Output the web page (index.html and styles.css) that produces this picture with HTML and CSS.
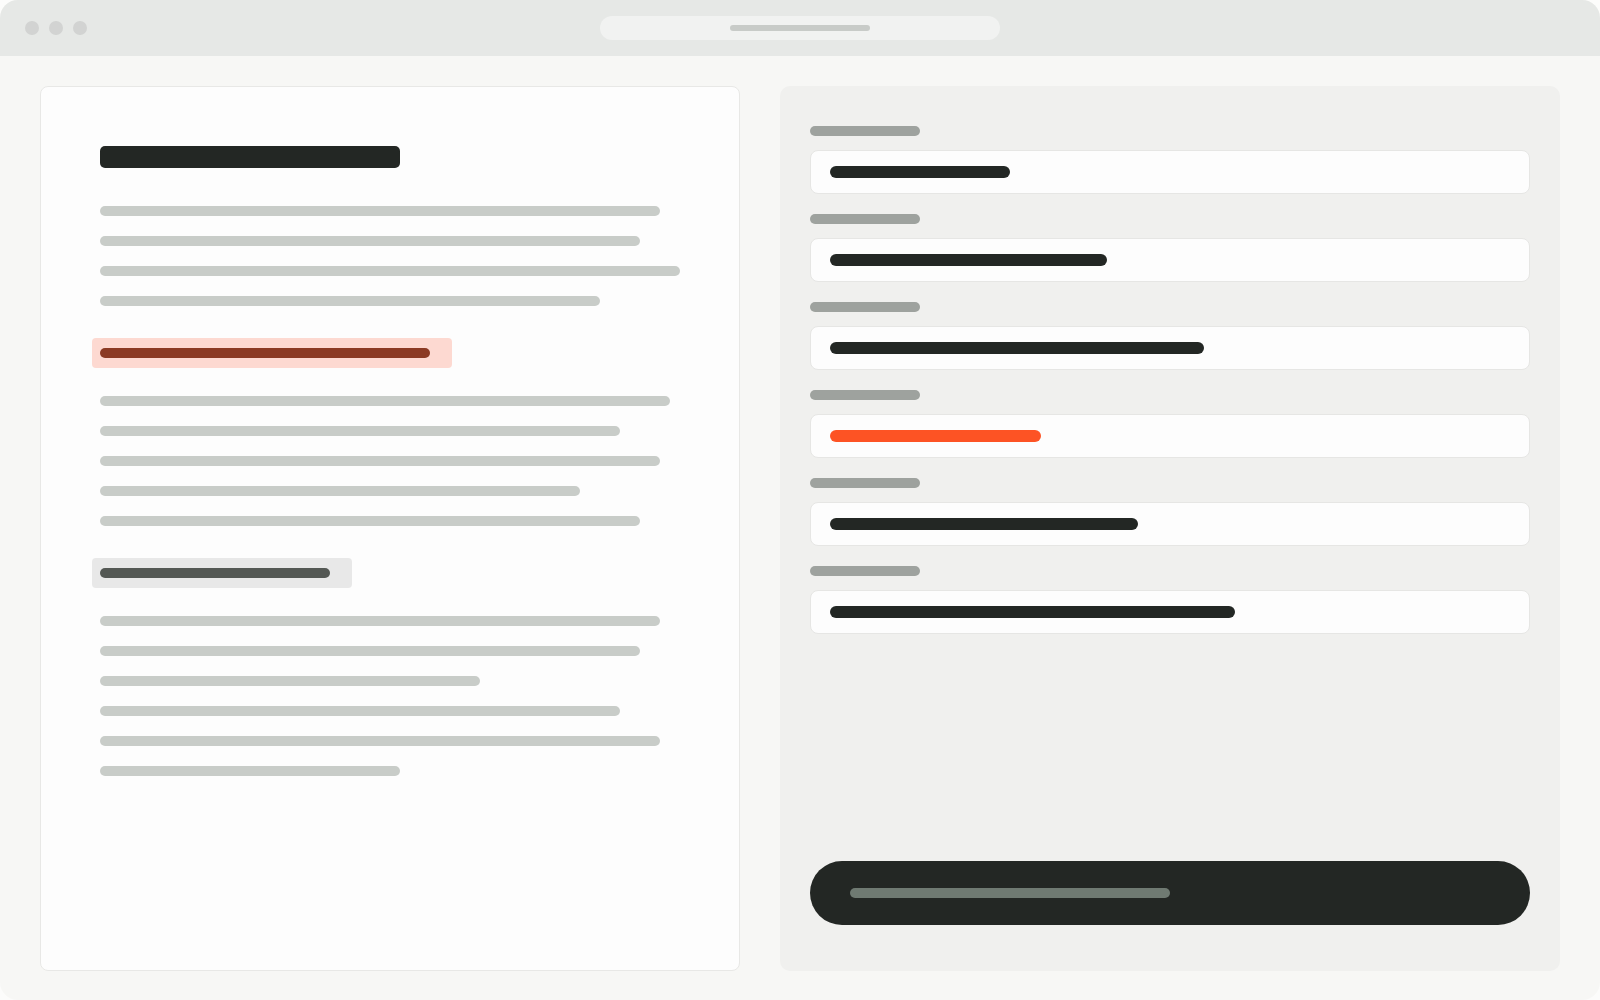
FILE: index.html
```html
<!DOCTYPE html>
<html lang="en">
<head>
<meta charset="utf-8">
<title>Document review</title>
<link rel="stylesheet" href="styles.css">
</head>
<body>
<div class="window">
  <header class="titlebar">
    <div class="dots"><span class="dot"></span><span class="dot"></span><span class="dot"></span></div>
    <div class="urlbar"><span class="url-line"></span></div>
    <div></div>
  </header>
  <main class="main">
    <section class="doc">
      <div class="doc-title"></div>
      <div class="lines">
        <div class="line w560"></div>
        <div class="line w540"></div>
        <div class="line w580"></div>
        <div class="line w500"></div>
      </div>
      <div class="mark mark-red"><span class="mark-line w330"></span></div>
      <div class="lines">
        <div class="line w570"></div>
        <div class="line w520"></div>
        <div class="line w560"></div>
        <div class="line w480"></div>
        <div class="line w540"></div>
      </div>
      <div class="mark mark-gray"><span class="mark-line w230"></span></div>
      <div class="lines">
        <div class="line w560"></div>
        <div class="line w540"></div>
        <div class="line w380"></div>
        <div class="line w520"></div>
        <div class="line w560"></div>
        <div class="line w300"></div>
      </div>
    </section>
    <aside class="panel">
      <div class="fields">
        <div class="field"><div class="label"></div><div class="input"><span class="value w180"></span></div></div>
        <div class="field"><div class="label"></div><div class="input"><span class="value w277"></span></div></div>
        <div class="field"><div class="label"></div><div class="input"><span class="value w374"></span></div></div>
        <div class="field"><div class="label"></div><div class="input"><span class="value value-alert w211"></span></div></div>
        <div class="field"><div class="label"></div><div class="input"><span class="value w308"></span></div></div>
        <div class="field"><div class="label"></div><div class="input"><span class="value w405"></span></div></div>
      </div>
      <button class="submit" type="button"><span class="submit-line"></span></button>
    </aside>
  </main>
</div>
</body>
</html>
```

FILE: styles.css
```css
* { box-sizing: border-box; }
html, body { margin: 0; padding: 0; }
body {
  background: #fcfcfb;
  font-family: "Liberation Sans", Arial, sans-serif;
  width: 1600px;
  height: 1000px;
  overflow: hidden;
}
.window {
  width: 1600px;
  height: 1000px;
  background: #f7f7f5;
  border-radius: 18px;
  overflow: hidden;
  display: flex;
  flex-direction: column;
}
.titlebar {
  height: 56px;
  flex: 0 0 56px;
  background: #e6e8e6;
  display: grid;
  grid-template-columns: 1fr 400px 1fr;
  align-items: center;
}
.dots {
  display: flex;
  gap: 10px;
  padding-left: 25px;
}
.dot {
  width: 14px;
  height: 14px;
  border-radius: 50%;
  background: #d2d3d2;
}
.urlbar {
  height: 24px;
  border-radius: 12px;
  background: #f1f2f1;
  display: flex;
  align-items: center;
  justify-content: center;
}
.url-line {
  width: 140px;
  height: 6px;
  border-radius: 3px;
  background: #c8cbc8;
}
.main {
  flex: 1;
  display: flex;
  gap: 40px;
  padding: 30px 40px 29px 40px;
}
.doc {
  width: 700px;
  background: #fdfdfd;
  border: 1px solid #e8e8e6;
  border-radius: 8px;
  padding: 59px 59px;
  display: flex;
  flex-direction: column;
  align-items: flex-start;
}
.doc-title {
  width: 300px;
  height: 22px;
  border-radius: 5px;
  background: #232724;
  margin-bottom: 38px;
}
.lines {
  display: flex;
  flex-direction: column;
  gap: 20px;
}
.line {
  height: 10px;
  border-radius: 5px;
  background: #c8ccc8;
}
.mark {
  margin: 32px 0 28px -8px;
  padding: 10px 8px;
  border-radius: 4px;
}
.mark-red { width: 360px; background: #fdd9d1; }
.mark-red .mark-line { background: #8b3a24; }
.mark-gray { width: 260px; background: #e8e8e8; }
.mark-gray .mark-line { background: #545854; }
.mark-line {
  display: block;
  height: 10px;
  border-radius: 5px;
}
.w580 { width: 580px; }
.w570 { width: 570px; }
.w560 { width: 560px; }
.w540 { width: 540px; }
.w520 { width: 520px; }
.w500 { width: 500px; }
.w480 { width: 480px; }
.w380 { width: 380px; }
.w330 { width: 330px; }
.w300 { width: 300px; }
.w230 { width: 230px; }
.w180 { width: 180px; }
.w211 { width: 211px; }
.w277 { width: 277px; }
.w308 { width: 308px; }
.w374 { width: 374px; }
.w405 { width: 405px; }

.panel {
  width: 780px;
  background: #f0f0ee;
  border-radius: 10px;
  padding: 40px 30px 46px 30px;
  display: flex;
  flex-direction: column;
}
.fields {
  display: flex;
  flex-direction: column;
  gap: 20px;
}
.field {
  display: flex;
  flex-direction: column;
  gap: 14px;
}
.label {
  width: 110px;
  height: 10px;
  border-radius: 5px;
  background: #9ea29e;
}
.input {
  height: 44px;
  background: #fdfdfd;
  border: 1px solid #e6e6e4;
  border-radius: 8px;
  padding-left: 19px;
  display: flex;
  align-items: center;
}
.value {
  height: 12px;
  border-radius: 6px;
  background: #232724;
}
.value-alert { background: #fd5324; }
.submit {
  margin-top: auto;
  height: 64px;
  width: 100%;
  border: none;
  border-radius: 32px;
  background: #232724;
  padding: 0 0 0 40px;
  display: flex;
  align-items: center;
  cursor: pointer;
}
.submit-line {
  width: 320px;
  height: 10px;
  border-radius: 5px;
  background: #6f7a72;
}
```
